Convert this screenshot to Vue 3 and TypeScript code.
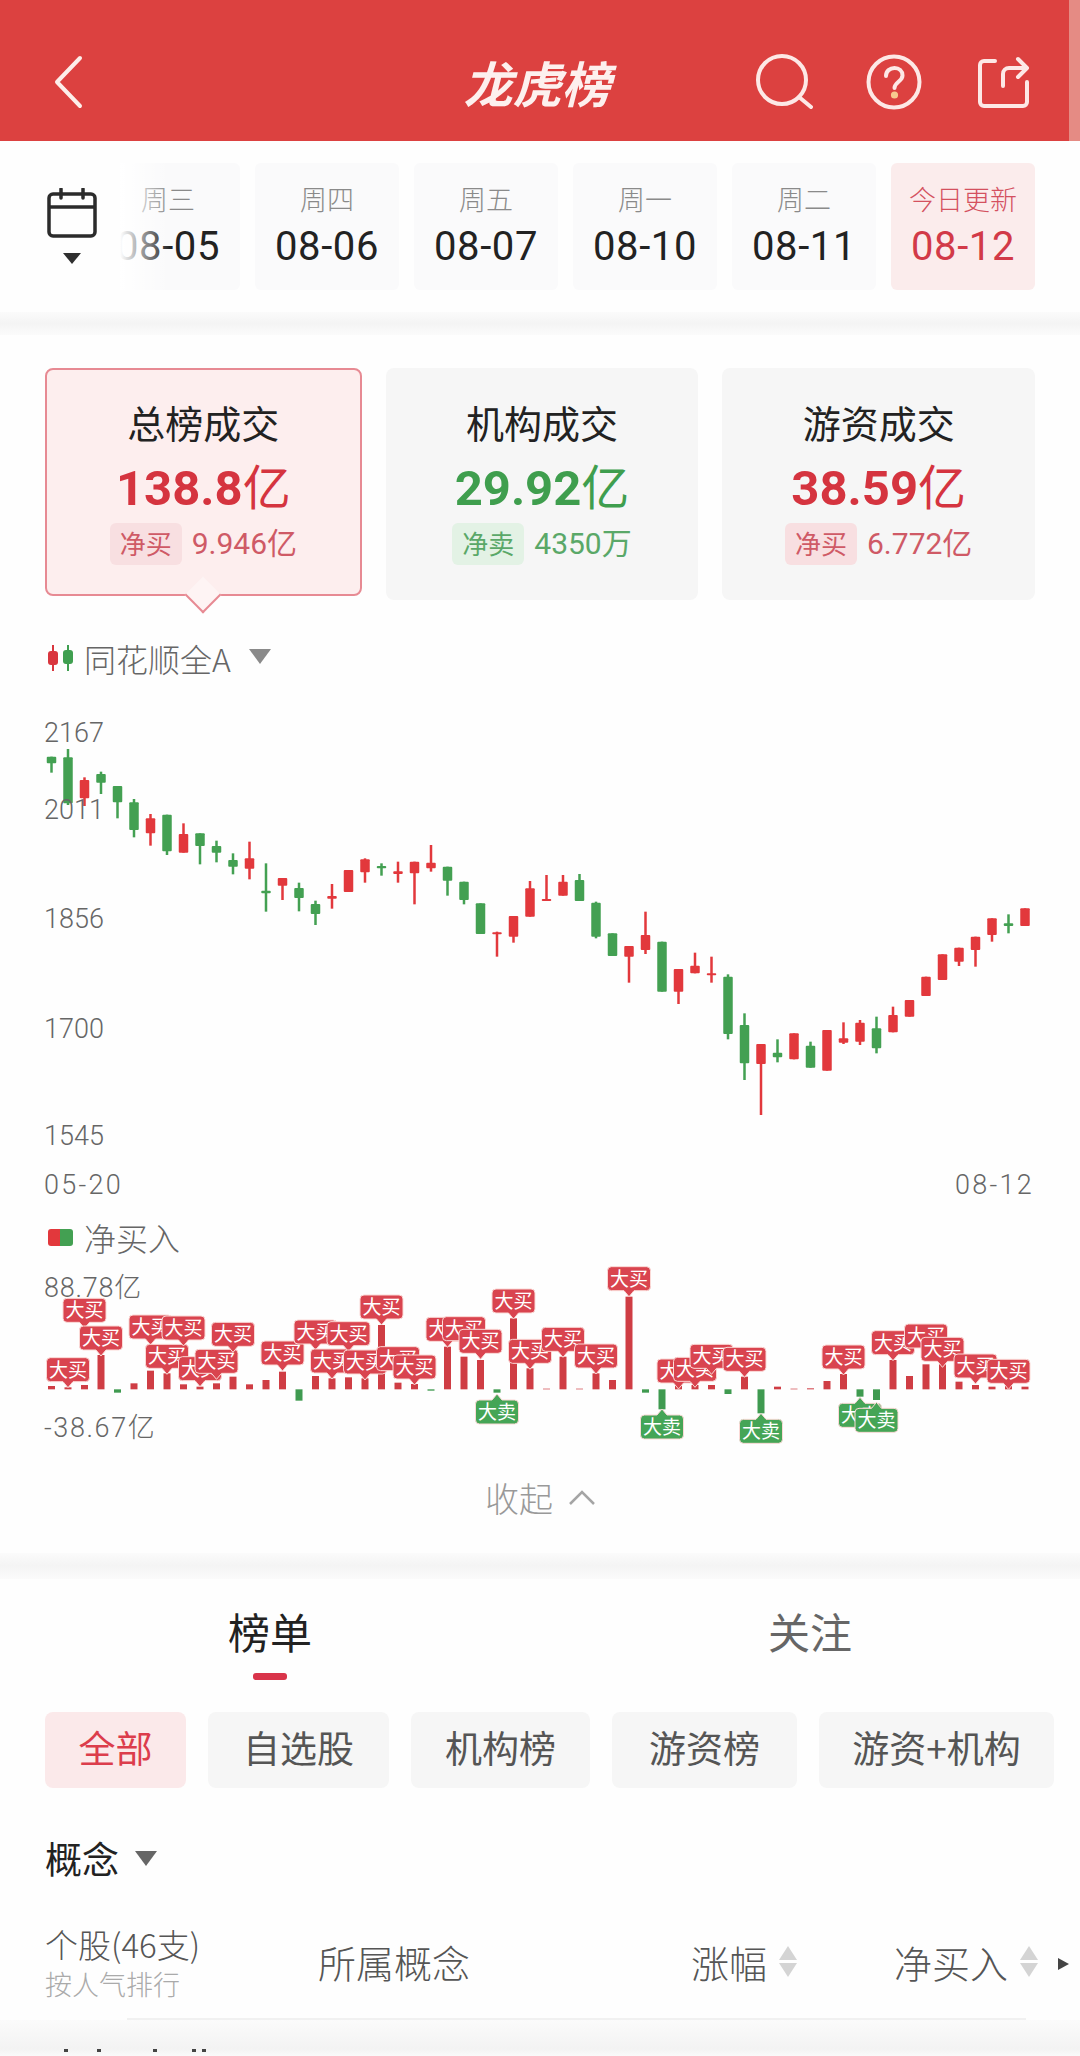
<template>
  <div class="page">
    <header class="topbar">
      <div class="back">
        <svg width="30" height="54" viewBox="0 0 30 54" fill="none" stroke="#fdeeea" stroke-width="4" stroke-linecap="round" stroke-linejoin="round">
          <path d="M26 3 3 27l23 24" />
        </svg>
      </div>
      <div class="title">龙虎榜</div>
      <div class="actions">
        <svg class="search" width="58" height="56" viewBox="0 0 58 56" fill="none" stroke="#fde8e6" stroke-width="4" stroke-linecap="round">
          <circle cx="27" cy="26" r="24" />
          <path d="m44 43 12 10" />
        </svg>
        <svg width="56" height="56" viewBox="0 0 56 56" fill="none" stroke="#fde8e6" stroke-width="4" stroke-linecap="round">
          <circle cx="28" cy="28" r="25.5" />
          <path d="M20 22c0-5 4-8 8.500-8s8 3 8 7.500c0 6-8 6.500-8 12.500" />
          <circle cx="28.500" cy="41" r="1.600" fill="#f7c98f" stroke="#f7c98f" />
        </svg>
        <svg width="52" height="52" viewBox="0 0 52 52" fill="none" stroke="#fde8e6" stroke-width="4" stroke-linecap="round" stroke-linejoin="round">
          <path d="M17 5H6a4 4 0 0 0-4 4v37a4 4 0 0 0 4 4h39a4 4 0 0 0 4-4V26" />
          <path d="M25 30V18a6 6 0 0 1 6-6h17" />
          <path d="m40 3 9 9-9 9" />
        </svg>
      </div>
    </header>

    <section class="dates">
      <div class="calendar">
        <svg width="50" height="50" viewBox="0 0 50 50" fill="none" stroke="#2b2b2b" stroke-width="3.500" stroke-linejoin="round">
          <rect x="2" y="6" width="46" height="42" rx="4" />
          <path d="M2 19h46" />
          <path d="M14 1v9M36 1v9" stroke-linecap="round" />
        </svg>
        <span class="calendar-caret"></span>
      </div>
      <div class="date-strip">
        <div v-for="d in dates" :key="d.date" class="date-card" :class="{ today: d.today }">
          <div class="date-week">{{ d.week }}</div>
          <div class="date-num">{{ d.date }}</div>
        </div>
      </div>
    </section>

    <div class="gap-bar gap-top"></div>

    <section class="stats">
      <div v-for="s in stats" :key="s.title" class="stat" :class="[s.tone, { active: s.active }]">
        <div class="stat-title">{{ s.title }}</div>
        <div class="stat-value">{{ s.value }}<span class="unit">{{ s.unit }}</span></div>
        <div class="stat-sub">
          <span class="stat-tag">{{ s.tag }}</span>
          <span class="stat-net">{{ s.net }}</span>
        </div>
      </div>
    </section>

    <div class="index-row">
      <svg width="28" height="26" viewBox="0 0 28 26">
        <path d="M6 0v26" stroke="#d9363e" stroke-width="2" />
        <rect x="1" y="6" width="10" height="14" rx="3" fill="#d9363e" />
        <path d="M21 0v26" stroke="#3f9f50" stroke-width="2" />
        <rect x="16" y="5" width="10" height="14" rx="3" fill="#3f9f50" />
      </svg>
      <span class="index-name">同花顺全A</span>
      <span class="caret grey"></span>
    </div>

    <svg class="candles" width="1080" height="522" viewBox="0 678 1080 522">
      <g v-for="c in candleRects" :key="c.x" :fill="c.color">
        <rect :x="c.x - 1.25" :y="c.wickTop" width="2.5" :height="c.wickH" />
        <rect :x="c.x - 4.75" :y="c.top" width="9.5" :height="c.h" rx="1" />
      </g>
      <text v-for="a in axisLabels" :key="a.text" class="axis" :class="{ 'axis-date': a.date }" :x="a.x" :y="a.y">{{ a.text }}</text>
    </svg>

    <div class="net-head">
      <span class="legend"></span>
      <span class="net-title">净买入</span>
    </div>

    <svg class="net" width="1080" height="213" viewBox="0 1259 1080 213">
      <text class="axis axis-amount" x="44" y="1297">88.78亿</text>
      <text class="axis axis-minus" x="44" y="1437">-38.67亿</text>
      <rect v-for="b in netBars" :key="b.x" :x="b.x - 3.5" :y="b.y" width="7" :height="b.h" :fill="b.color" />
      <g v-for="l in netLabels" :key="l.x">
        <path :d="l.shape" :fill="l.color" stroke="#fbd9d6" stroke-width="1" />
        <text class="flag" :x="l.x" :y="l.textY">{{ l.text }}</text>
      </g>
    </svg>

    <div class="collapse">
      <span>收起</span>
      <svg width="26" height="15" viewBox="0 0 26 15" fill="none" stroke="#a5a5a5" stroke-width="2.500">
        <path d="M1 14 13 2l12 12" />
      </svg>
    </div>

    <div class="gap-bar gap-mid"></div>

    <nav class="tabs">
      <div class="tab on">榜单<i></i></div>
      <div class="tab">关注</div>
    </nav>

    <div class="chips">
      <span v-for="(c, i) in chips" :key="c" class="chip" :class="{ on: i === 0 }">{{ c }}</span>
    </div>

    <div class="concept">
      <span>概念</span>
      <span class="caret dark"></span>
    </div>

    <div class="thead">
      <div class="th-stock">
        <div>个股(46支)</div>
        <div class="th-hint">按人气排行</div>
      </div>
      <div class="th-col">所属概念</div>
      <div class="th-col th-sort">涨幅<span class="sort"><b></b><b></b></span></div>
      <div class="th-col th-sort">净买入<span class="sort"><b></b><b></b></span></div>
      <span class="more"></span>
    </div>

    <div class="thead-rule"></div>
    <div class="row-fade">
      <i v-for="x in clippedMarks" :key="x" :style="{ left: x + 'px' }"></i>
    </div>
  </div>
</template>

<script setup lang="ts">
import { computed } from 'vue'

const RED = '#e2383c'
const GREEN = '#43a052'
const FLAG_RED = '#d9444f'
const FLAG_GREEN = '#45a556'

const dates = [
  { week: '周三', date: '08-05' },
  { week: '周四', date: '08-06' },
  { week: '周五', date: '08-07' },
  { week: '周一', date: '08-10' },
  { week: '周二', date: '08-11' },
  { week: '今日更新', date: '08-12', today: true }
]

const stats = [
  { title: '总榜成交', value: '138.8', unit: '亿', tag: '净买', net: '9.946亿', tone: 'up', active: true },
  { title: '机构成交', value: '29.92', unit: '亿', tag: '净卖', net: '4350万', tone: 'down', active: false },
  { title: '游资成交', value: '38.59', unit: '亿', tag: '净买', net: '6.772亿', tone: 'up', active: false }
]

const chips = ['全部', '自选股', '机构榜', '游资榜', '游资+机构']
const clippedMarks = [64, 97, 153, 192, 202]

// 价格K线：[是否上涨, 实体上沿, 实体下沿, 影线上沿, 影线下沿]，取值是相对 y=680 的 3 倍坐标
type Candle = [number, number, number, number, number]
const candles: Candle[] = [
  [0, 230, 250, 230, 278], [0, 232, 370, 207, 375], [1, 300, 355, 292, 378], [0, 282, 308, 275, 342],
  [0, 318, 367, 318, 415], [0, 367, 450, 357, 472], [1, 415, 460, 402, 497], [0, 404, 514, 404, 525],
  [1, 462, 518, 430, 518], [0, 460, 498, 460, 553], [0, 498, 518, 482, 547], [0, 540, 560, 520, 583],
  [1, 535, 566, 485, 598], [0, 632, 640, 550, 695], [1, 594, 617, 594, 660], [0, 624, 654, 608, 694],
  [0, 672, 702, 662, 735], [1, 648, 656, 612, 686], [1, 570, 636, 570, 636], [1, 538, 577, 535, 608],
  [0, 558, 565, 550, 587], [1, 574, 582, 545, 608], [1, 545, 580, 545, 673], [1, 548, 565, 495, 575],
  [0, 560, 602, 560, 647], [0, 605, 660, 605, 673], [0, 670, 762, 670, 762], [1, 757, 763, 755, 830],
  [1, 708, 770, 708, 788], [1, 625, 710, 603, 710], [1, 657, 663, 585, 663], [1, 605, 647, 585, 647],
  [0, 600, 663, 582, 663], [0, 668, 770, 665, 775], [0, 760, 828, 760, 828], [1, 798, 830, 798, 908],
  [1, 765, 810, 695, 822], [0, 785, 935, 785, 935], [1, 867, 935, 867, 972], [1, 857, 880, 818, 880],
  [1, 880, 886, 830, 908], [0, 890, 1062, 883, 1078], [0, 1035, 1150, 1000, 1200], [1, 1092, 1152, 1092, 1305],
  [0, 1118, 1132, 1078, 1147], [1, 1060, 1138, 1060, 1138], [0, 1097, 1163, 1085, 1163], [1, 1050, 1172, 1050, 1172],
  [1, 1075, 1088, 1027, 1092], [1, 1028, 1085, 1020, 1095], [0, 1045, 1105, 1010, 1120], [1, 1005, 1057, 980, 1057],
  [1, 960, 1010, 960, 1010], [1, 890, 948, 890, 948], [1, 823, 900, 823, 900], [1, 803, 845, 803, 858],
  [1, 770, 810, 770, 860], [1, 715, 765, 715, 785], [0, 730, 738, 703, 760], [1, 685, 738, 685, 738]
]

const axisLabels = [
  { text: '2167', x: 44, y: 742 },
  { text: '2011', x: 44, y: 819 },
  { text: '1856', x: 44, y: 928 },
  { text: '1700', x: 44, y: 1038 },
  { text: '1545', x: 44, y: 1145 },
  { text: '05-20', x: 44, y: 1194, date: true },
  { text: '08-12', x: 955, y: 1194, date: true }
]

const slotX = (i: number) => 51.5 + 16.5 * i

const candleRects = computed(() =>
  candles.map(([up, top, bottom, wickTop, wickBottom], i) => ({
    x: slotX(i),
    color: up ? RED : GREEN,
    top: 680 + top / 3,
    h: (bottom - top) / 3,
    wickTop: 680 + wickTop / 3,
    wickH: (wickBottom - wickTop) / 3
  }))
)

// 净买入柱：相对 y=1200 的 3 倍坐标，568 是零轴
const NET_ZERO = 568
const netValues = [
  558, 562, 555, 465, 578, 550, 512, 520, 553, 560, 550, 530, 553, 540, 515, 602, 528, 535, 532, 535,
  375, 548, 552, 572, 440, 470, 480, 578, 355, 505, 566, 470, 566, 520, 540, 290, 578, 628, 555, 555,
  555, 582, 530, 640, 560, 566, 565, 543, 522, 590, 600, 480, 528, 493, 493, 545, 555, 560, 558, 560
]

const netBars = computed(() =>
  netValues.map((v, i) => {
    const down = v > NET_ZERO
    return {
      x: slotX(i),
      y: 1200 + Math.min(v, NET_ZERO) / 3,
      h: Math.abs(v - NET_ZERO) / 3,
      color: down ? '#3f9a50' : '#cf3d44'
    }
  })
)

// [柱序号, 标签上沿, 是否大卖]
const flags: [number, number, number][] = [
  [1, 473, 0], [2, 295, 0], [3, 378, 0], [6, 345, 0], [7, 433, 0], [8, 348, 0], [9, 470, 0], [10, 448, 0],
  [11, 367, 0], [14, 423, 0], [16, 360, 0], [17, 447, 0], [18, 365, 0], [19, 450, 0], [20, 285, 0], [21, 440, 0],
  [22, 465, 0], [24, 352, 0], [25, 350, 0], [26, 388, 0], [27, 600, 1], [28, 267, 0], [29, 418, 0], [31, 382, 0],
  [33, 432, 0], [35, 200, 0], [37, 645, 1], [38, 477, 0], [39, 472, 0], [40, 433, 0], [42, 442, 0], [43, 658, 1],
  [48, 435, 0], [49, 610, 1], [50, 625, 1], [51, 392, 0], [53, 372, 0], [54, 412, 0], [56, 462, 0], [58, 478, 0]
]

const netLabels = computed(() =>
  flags.map(([i, top, sell]) => {
    const x = slotX(i)
    const y = 1200 + top / 3
    const l = x - 21.5
    const r = x + 21.5
    const b = y + 24
    const shape = sell
      ? `M${l + 4} ${y}H${x - 5}L${x} ${y - 6}L${x + 5} ${y}H${r - 4}Q${r} ${y} ${r} ${y + 4}V${b - 4}Q${r} ${b} ${r - 4} ${b}H${l + 4}Q${l} ${b} ${l} ${b - 4}V${y + 4}Q${l} ${y} ${l + 4} ${y}Z`
      : `M${l + 4} ${y}H${r - 4}Q${r} ${y} ${r} ${y + 4}V${b - 4}Q${r} ${b} ${r - 4} ${b}H${x + 5}L${x} ${b + 6}L${x - 5} ${b}H${l + 4}Q${l} ${b} ${l} ${b - 4}V${y + 4}Q${l} ${y} ${l + 4} ${y}Z`
    return {
      x,
      shape,
      textY: y + 19,
      text: sell ? '大卖' : '大买',
      color: sell ? FLAG_GREEN : FLAG_RED
    }
  })
)
</script>

<style scoped>
.page {
  position: relative;
  width: 1080px;
  height: 2056px;
  overflow: hidden;
  background: #fefefe;
  font-family: "Noto Sans CJK SC", "Liberation Sans", sans-serif;
  color: #222;
}

.topbar {
  position: relative;
  box-sizing: border-box;
  height: 141px;
  padding: 22px 60px 0 54px;
  display: grid;
  grid-template-columns: 1fr auto 1fr;
  align-items: center;
  background: #dc4140;
}

.topbar::after {
  content: "";
  position: absolute;
  top: 0;
  right: 0;
  bottom: 0;
  width: 11px;
  background: #e58b84;
}

.back svg {
  display: block;
}

.title {
  font-size: 49px;
  line-height: 60px;
  font-weight: 700;
  font-style: italic;
  color: #fdf0ee;
}

.actions {
  margin-right: -10px;
  display: flex;
  justify-content: flex-end;
  align-items: center;
  gap: 56px;
}

.actions .search {
  margin-right: -3px;
}

.dates {
  box-sizing: border-box;
  height: 171px;
  padding: 22px 45px 0 47px;
  display: flex;
  align-items: flex-start;
}

.calendar {
  flex: none;
  width: 50px;
  padding-top: 25px;
  display: flex;
  flex-direction: column;
  align-items: center;
}

.calendar svg {
  display: block;
}

.calendar-caret {
  margin-top: 15px;
  border-left: 9px solid transparent;
  border-right: 9px solid transparent;
  border-top: 11px solid #2f2f2f;
}

.date-strip {
  position: relative;
  flex: 1;
  margin-left: 23px;
  display: flex;
  justify-content: flex-end;
  gap: 15px;
  overflow: hidden;
}

.date-strip::before {
  content: "";
  position: absolute;
  top: 0;
  bottom: 0;
  left: 0;
  width: 50px;
  background: linear-gradient(to right, #fff, rgba(255, 255, 255, 0));
  z-index: 1;
}

.date-card {
  flex: none;
  width: 144px;
  height: 127px;
  padding-top: 17px;
  box-sizing: border-box;
  border-radius: 6px;
  background: #fafafb;
  text-align: center;
}

.date-card.today {
  background: #fbecec;
}

.date-week {
  font-size: 27px;
  line-height: 38px;
  font-weight: 300;
  color: #8a8a8a;
}

.date-num {
  margin-top: 6px;
  font-family: Roboto, "Liberation Sans", sans-serif;
  font-size: 40px;
  line-height: 46px;
  letter-spacing: 0.6px;
  color: #222;
}

.today .date-week {
  color: #d4515f;
}

.today .date-num {
  color: #d23a48;
}

.gap-bar {
  background: linear-gradient(to bottom, #fbfbfb, #f4f4f4 50%, #fbfbfb);
}

.gap-top {
  height: 23px;
}

.stats {
  padding: 33px 45px 0;
  display: flex;
  align-items: flex-start;
  gap: 24px;
}

.stat {
  position: relative;
  box-sizing: border-box;
  flex: 1;
  height: 232px;
  padding-top: 34px;
  border-radius: 8px;
  background: #f6f6f6;
  text-align: center;
}

.stat.active {
  height: 228px;
  padding-top: 32px;
  border: 2px solid #e78a93;
  background: #fdeeee;
}

.stat.active::after {
  content: "";
  position: absolute;
  left: 50%;
  bottom: -14px;
  width: 26px;
  height: 26px;
  margin-left: -13px;
  box-sizing: border-box;
  border-right: 2px solid #e78a93;
  border-bottom: 2px solid #e78a93;
  background: #fef4f4;
  transform: rotate(45deg);
}

.stat-title {
  font-size: 38px;
  line-height: 40px;
  color: #222;
}

.stat-value {
  margin-top: 14px;
  font-family: Roboto, "Liberation Sans", sans-serif;
  font-size: 49px;
  line-height: 56px;
  font-weight: 700;
}

.unit {
  font-family: "Noto Sans CJK SC", sans-serif;
  font-weight: 400;
  font-size: 48px;
}

.stat-sub {
  margin-top: 6px;
  display: flex;
  justify-content: center;
  align-items: center;
  gap: 10px;
}

.stat-tag {
  padding: 0 10px;
  height: 42px;
  border-radius: 6px;
  font-size: 26px;
  line-height: 40px;
}

.stat-net {
  font-family: Roboto, "Noto Sans CJK SC", sans-serif;
  font-size: 30px;
  line-height: 42px;
}

.up .stat-value {
  color: #d5343f;
}

.up .stat-net,
.up .stat-tag {
  color: #cf5a66;
}

.up .stat-tag {
  background: #f8dfe1;
}

.down .stat-value {
  color: #3f9e4e;
}

.down .stat-net,
.down .stat-tag {
  color: #5aa868;
}

.down .stat-tag {
  background: #e3f2e5;
}

.index-row {
  box-sizing: border-box;
  height: 36px;
  margin: 40px 0 2px;
  padding-left: 47px;
  display: flex;
  align-items: center;
}

.index-name {
  margin-left: 9px;
  font-size: 32px;
  line-height: 36px;
  font-weight: 300;
  color: #666;
}

.caret {
  display: inline-block;
  border-left: 11px solid transparent;
  border-right: 11px solid transparent;
  border-top: 15px solid #8a8a8a;
}

.index-row .caret {
  margin-left: 18px;
  margin-top: -4px;
}

.caret.dark {
  border-top-color: #666;
}

.candles,
.net {
  display: block;
}

.axis {
  font-family: Roboto, "Noto Sans CJK SC", sans-serif;
  font-size: 27px;
  font-weight: 300;
  fill: #666;
}

.axis-date {
  letter-spacing: 2.3px;
}

.axis-amount {
  letter-spacing: 0.8px;
}

.axis-minus {
  letter-spacing: 1.6px;
}

.flag {
  font-size: 19px;
  fill: #fff;
  text-anchor: middle;
}

.net-head {
  box-sizing: border-box;
  height: 40px;
  margin: 17px 0 2px;
  padding-left: 48px;
  display: flex;
  align-items: center;
}

.legend {
  width: 25px;
  height: 17px;
  border-radius: 3px;
  background: linear-gradient(to right, #e2383c 50%, #43a052 50%);
}

.net-title {
  margin-left: 11px;
  font-size: 32px;
  line-height: 40px;
  font-weight: 300;
  color: #666;
}

.collapse {
  height: 50px;
  display: flex;
  justify-content: center;
  align-items: center;
  gap: 16px;
  font-size: 34px;
  font-weight: 300;
  color: #999;
}

.gap-mid {
  height: 26px;
  margin-top: 31px;
}

.tabs {
  height: 101px;
  display: grid;
  grid-template-columns: 1fr 1fr;
}

.tab {
  padding-top: 28px;
  font-size: 42px;
  line-height: 48px;
  text-align: center;
  color: #666;
}

.tab.on {
  color: #222;
}

.tab i {
  display: block;
  width: 34px;
  height: 7px;
  margin: 18px auto 0;
  border-radius: 3px;
  background: #d9344a;
}

.chips {
  margin-top: 32px;
  padding-left: 45px;
  display: grid;
  grid-template-columns: 141px 181px 179px 185px 235px;
  column-gap: 22px;
}

.chip {
  height: 76px;
  border-radius: 8px;
  background: #f6f6f6;
  font-size: 37px;
  line-height: 70px;
  text-align: center;
  color: #555;
  white-space: nowrap;
}

.chip.on {
  background: #fbe9ea;
  color: #dc3d4c;
}

.concept {
  height: 50px;
  margin-top: 45px;
  padding-left: 45px;
  display: flex;
  align-items: center;
  gap: 16px;
  font-size: 37px;
  line-height: 50px;
}

.thead {
  position: relative;
  height: 81px;
  margin-top: 40px;
  padding-left: 45px;
  display: grid;
  grid-template-columns: 273px 373px 203px auto;
  align-items: center;
  font-size: 38px;
  font-weight: 300;
  color: #555;
}

.th-stock {
  font-size: 33px;
  line-height: 40px;
}

.th-hint {
  font-size: 27px;
  color: #aaa;
}

.th-col {
  padding-bottom: 5px;
}

.th-sort {
  display: flex;
  align-items: center;
}

.sort {
  margin-left: 12px;
  display: flex;
  flex-direction: column;
  gap: 3px;
}

.sort b {
  border-left: 9px solid transparent;
  border-right: 9px solid transparent;
  border-bottom: 14px solid #d4d4d4;
}

.sort b + b {
  border-bottom: none;
  border-top: 14px solid #d4d4d4;
}

.more {
  position: absolute;
  right: 11px;
  top: 35px;
  border-top: 6px solid transparent;
  border-bottom: 6px solid transparent;
  border-left: 11px solid #444;
}

.thead-rule {
  height: 2px;
  margin: 14px 54px 0 127px;
  background: #f1f1f1;
}

.row-fade {
  position: relative;
  height: 36px;
  background: linear-gradient(to bottom, #fbfbfb, #f3f3f3 80%, #fafafa);
}

.row-fade i {
  position: absolute;
  top: 29px;
  width: 4px;
  height: 3px;
  background: #444;
}
</style>

<style>
html,
body {
  margin: 0;
  background: #fefefe;
}
</style>
